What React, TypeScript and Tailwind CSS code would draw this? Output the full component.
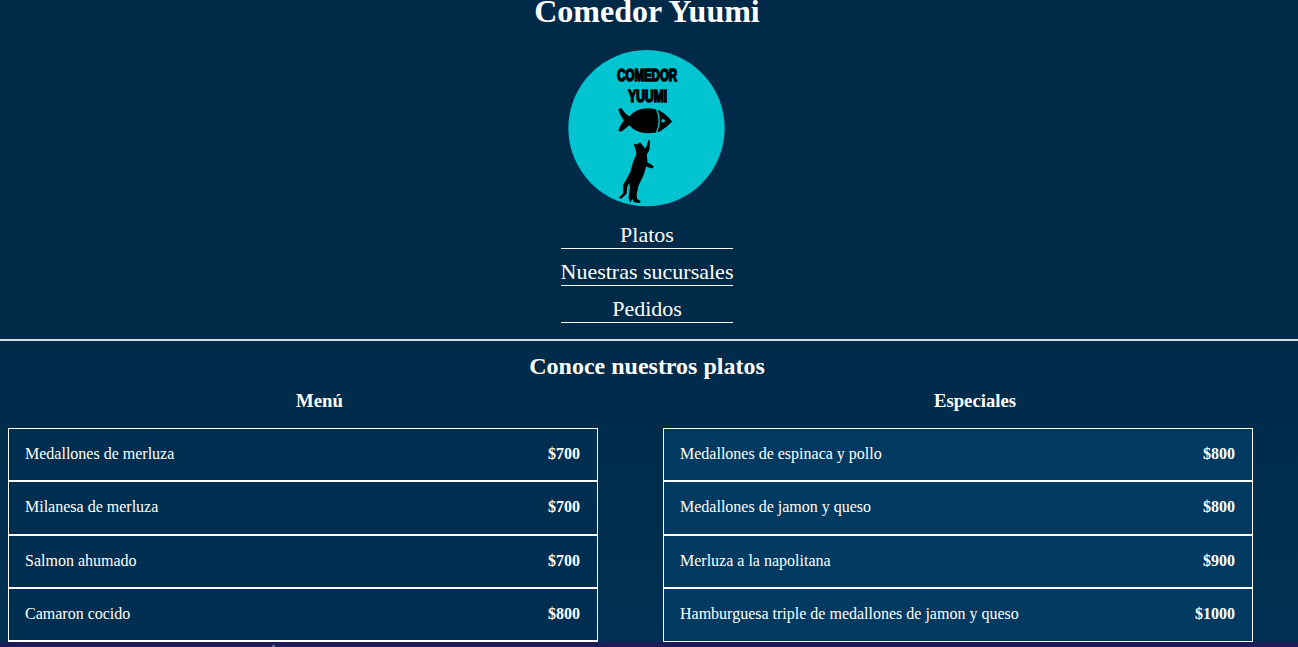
const menu = [
  ["Medallones de merluza", "$700"],
  ["Milanesa de merluza", "$700"],
  ["Salmon ahumado", "$700"],
  ["Camaron cocido", "$800"],
  ["", ""],
];
const specials = [
  ["Medallones de espinaca y pollo", "$800"],
  ["Medallones de jamon y queso", "$800"],
  ["Merluza a la napolitana", "$900"],
  ["Hamburguesa triple de medallones de jamon y queso", "$1000"],
];

function Logo() {
  return (
    <svg viewBox="0 0 472 472" className="block h-[157px] w-[157px]">
      <circle cx="236" cy="235" r="235" fill="#00c4d0" />
      <text x="148" y="92" fontFamily="'Liberation Sans', sans-serif" fontWeight="700" fontSize="50" textLength="180" lengthAdjust="spacingAndGlyphs" stroke="#000" strokeWidth="5">COMEDOR</text>
      <text x="181" y="157" fontFamily="'Liberation Sans', sans-serif" fontWeight="700" fontSize="50" textLength="117" lengthAdjust="spacingAndGlyphs" stroke="#000" strokeWidth="5">YUUMI</text>
      <path d="M151 178 L160 174 Q170 190 184 200 Q205 175 240 175 Q262 175 276 183 Q296 194 313 215 Q296 234 276 245 Q262 250 240 250 Q205 250 184 226 Q170 238 160 246 L151 243 Q156 226 168 212 Q156 196 151 178 Z" fill="#000" />
      <path d="M266 177 Q282 214 266 248" fill="none" stroke="#00c4d0" strokeWidth="4" />
      <circle cx="286" cy="213" r="5.5" fill="#00c4d0" />
      <path transform="translate(96 240)" d="M146 30 L150 32 L149 60 L141 74 L143 98 L152 103 L162 110 L158 116 L147 113 L139 110 L131 137 L116 167 L110 195 L112 208 L122 214 L120 220 L102 218 L97 207 L92 219 L86 205 L90 172 L88 160 L82 172 L80 192 L64 207 L57 204 L70 190 L70 165 L80 148 L92 125 L100 95 L110 72 L106 56 L102 42 L112 44 L120 37 L128 46 L136 56 L141 47 Z" fill="#000" />
    </svg>
  );
}

function PriceList({ title, rows, wide, tint }: { title: string; rows: string[][]; wide: string; tint: string }) {
  return (
    <div className={wide}>
      <h3 className="m-0 text-center text-[18.72px] font-bold leading-[21px]">{title}</h3>
      <div className={`ml-2 mt-[17px] w-[590px] border border-b-0 border-white ${tint}`}>
        {rows.map((r, i) => (
          <div key={i} className="flex h-[53.25px] items-center justify-between border-b-2 border-white pb-[1px] pl-4 pr-[17px] last:border-b">
            <span className="text-[16px]">{r[0]}</span>
            <span className="text-[16px] font-bold">{r[1]}</span>
          </div>
        ))}
      </div>
    </div>
  );
}

export default function App() {
  return (
    <div className="relative h-[647px] overflow-hidden bg-gradient-to-b from-[#002a48] via-[#002a48] to-[#003052] font-['Liberation_Serif',serif] text-white">
      <header className="flex w-[1294px] flex-col items-center">
        <h1 className="m-0 -mt-[7px] text-[32px] font-bold leading-[37px]">Comedor Yuumi</h1>
        <div className="mt-[20px] -translate-x-[1px]"><Logo /></div>
        <nav className="mt-[14px] flex flex-col text-center text-[22px] leading-[27px]">
          <a className="mb-[9px] h-[28px] border-b border-white">Platos</a>
          <a className="mb-[9px] h-[28px] border-b border-white">Nuestras sucursales</a>
          <a className="h-[28px] border-b border-white">Pedidos</a>
        </nav>
      </header>
      <hr className="mt-[16px] border-0 border-t-2 border-[#d8dde2]" />
      <h2 className="m-0 mt-[11px] w-[1294px] text-center text-[24px] font-bold leading-[28px]">Conoce nuestros platos</h2>
      <div className="mt-[10px] flex gap-4">
        <PriceList title="Menú" rows={menu} wide="w-[639px] shrink-0" tint="bg-[#002e50]" />
        <PriceList title="Especiales" rows={specials} wide="w-[640px] shrink-0" tint="bg-[#003a61]" />
      </div>
      <div className="absolute inset-x-0 bottom-0 h-[5px] bg-[#1d1c58]" />
      <div className="absolute bottom-0 left-[272px] h-[2px] w-[3px] bg-[#5a6a8a]" />
    </div>
  );
}
